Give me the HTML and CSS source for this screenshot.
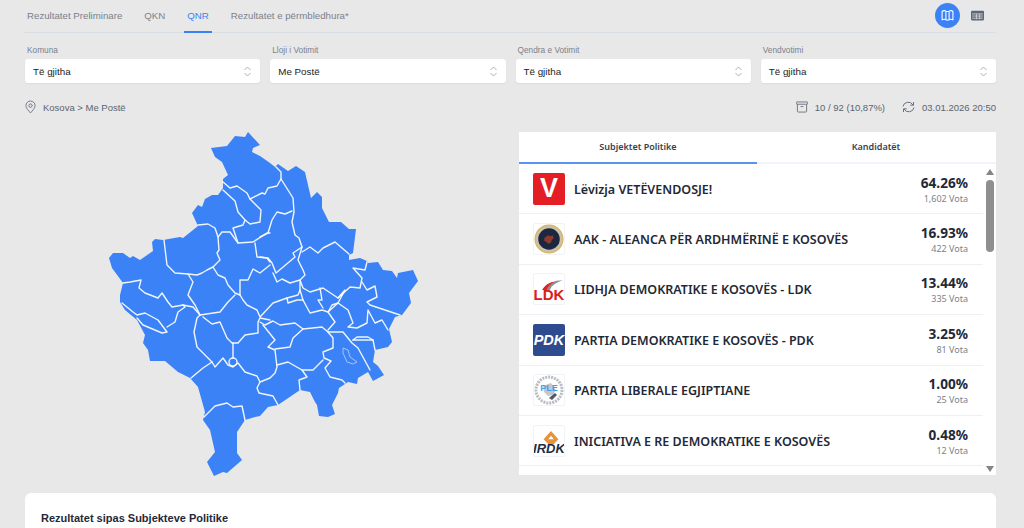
FILE: index.html
```html
<!DOCTYPE html>
<html lang="en">

<head>
    <meta charset="UTF-8">
    <title>Rezultatet</title>
    <link rel="stylesheet" href="styles.css">
</head>

<body>
    <div class="page">

        <div class="top-bar">
            <div class="tabs">
                <a class="tab">Rezultatet Preliminare</a>
                <a class="tab">QKN</a>
                <a class="tab active">QNR</a>
                <a class="tab">Rezultatet e përmbledhura*</a>
            </div>
            <div class="views">
                <span class="view-btn on">
                    <svg width="13" height="13" viewBox="0 0 24 24" fill="none" stroke="#fff" stroke-width="2" stroke-linejoin="round">
                        <path d="M2 4c3-1.500 5-1.500 7 0c2 1 4 1 6 0c2-1.500 4-1.500 7 0v16c-3-1.500-5-1.500-7 0c-2 1-4 1-6 0c-2-1.500-4-1.500-7 0z" />
                        <path d="M9 5v15M15 5v15" />
                    </svg>
                </span>
                <span class="view-btn">
                    <svg width="13" height="13" viewBox="0 0 24 24">
                        <rect x="0" y="3" width="24" height="18" rx="2" fill="#5f6673" />
                        <path d="M2 9h20M2 13h20M2 17h20M10 9v10M16 9v10" stroke="#e6e8ec" stroke-width="1.300" />
                    </svg>
                </span>
            </div>
        </div>

        <div class="filters">
            <div class="filter">
                <label>Komuna</label>
                <div class="select">Të gjitha
                    <svg class="updown" width="7" height="11" viewBox="0 0 7 11"><path d="M.5 4l3-3l3 3M.5 7l3 3l3-3" /></svg>
                </div>
            </div>
            <div class="filter">
                <label>Lloji i Votimit</label>
                <div class="select">Me Postë
                    <svg class="updown" width="7" height="11" viewBox="0 0 7 11"><path d="M.5 4l3-3l3 3M.5 7l3 3l3-3" /></svg>
                </div>
            </div>
            <div class="filter">
                <label>Qendra e Votimit</label>
                <div class="select">Të gjitha
                    <svg class="updown" width="7" height="11" viewBox="0 0 7 11"><path d="M.5 4l3-3l3 3M.5 7l3 3l3-3" /></svg>
                </div>
            </div>
            <div class="filter">
                <label>Vendvotimi</label>
                <div class="select">Të gjitha
                    <svg class="updown" width="7" height="11" viewBox="0 0 7 11"><path d="M.5 4l3-3l3 3M.5 7l3 3l3-3" /></svg>
                </div>
            </div>
        </div>

        <div class="info-row">
            <div class="crumb">
                <svg width="11" height="14" viewBox="0 0 12 14" fill="none" stroke="#6b7280" stroke-width="1">
                    <path d="M6 13.500c-2-2.500-5-5-5-8a5 5 0 0 1 10 0c0 3-3 5.500-5 8z" />
                    <circle cx="6" cy="5.500" r="1.800" />
                </svg>
                <span>Kosova &gt; Me Postë</span>
            </div>
            <div class="stats">
                <span class="stat">
                    <svg width="12" height="12" viewBox="0 0 13 12" fill="none" stroke="#6b7280" stroke-width="1">
                        <rect x="0.500" y="0.500" width="12" height="2.500" rx="0.500" />
                        <path d="M1.500 3v7.500a1 1 0 0 0 1 1h8a1 1 0 0 0 1-1V3M5 5.500h3" />
                    </svg>
                    10 / 92 (10,87%)
                </span>
                <span class="stat">
                    <svg width="13" height="12" viewBox="0 0 13 12" fill="none" stroke="#6b7280" stroke-width="1">
                        <path d="M1 5.500a5.300 5 0 0 1 10-1.500M12 6.500a5.300 5 0 0 1-10 1.500" />
                        <path d="M11.500 1v3.200H8.300M1.500 11V7.800h3.200" />
                    </svg>
                    03.01.2026 20:50
                </span>
            </div>
        </div>

        <div class="content">
            <div class="map-box">
                <svg class="map" width="494" height="355" viewBox="25 125 494 355">
                    <polygon class="land" points="211,148 227,146 235,136 245,137 248,132 260,145 253,148 252,152 260,156 270,163 275,167 278,164 288,171 296,166 305,172 311,198 317,192 322,197 322,208 329,222 341,222 349,229 356,229 353,253 349,255 349,260 360,258 367,261 368,263 378,262 383,270 392,271 397,278 398,273 413,270 418,281 409,293 411,303 402,315 395,317 389,329 392,342 388,347 375,350 373,362 378,366 384,375 373,381 368,372 358,378 357,384 348,382 339,388 338,393 332,405 335,414 328,417 319,416 317,405 315,402 310,392 300,390 278,405 268,407 260,416 255,417 245,420 237,432 237,453 242,460 227,473 223,472 214,476 207,462 215,452 210,430 203,420 205,412 198,387 190,378 178,372 165,361 150,361 148,350 143,343 145,335 137,320 125,310 120,302 120,295 123,283 112,268 109,258 113,253 123,253 130,258 133,256 140,260 153,251 152,242 155,239 163,240 180,237 183,238 198,226 192,213 198,205 202,207 205,199 212,195 218,195 223,188 223,179 228,175 222,162 215,157" />
                    <g class="borders">
                        <polyline points="223,182 230,188 237,186 247,193 250,199 262,193 265,194 268,188 277,186 281,179 281,172 276,167" />
                        <polyline points="281,179 293,198 294,212 292,222 295,235 299,238 302,247 293,253 295,257 276,273 272,263 268,258 260,257" />
                        <polyline points="302,247 298,260 303,270 305,275 300,280 290,283 282,279 277,282 273,273" />
                        <polyline points="302,252 310,247 318,253 323,248 335,242 349,254" />
                        <polyline points="367,262 365,270 353,268 362,278 360,288 350,287 338,298 323,288 310,292 303,288 300,280 300,290 303,300" />
                        <polyline points="362,282 367,290 375,286 377,297 367,302 370,305 400,315" />
                        <polyline points="260,237 268,233 272,220 277,212 285,214 292,211" />
                        <polyline points="223,190 235,201 238,212 245,220 243,225 233,228 238,243 253,242 267,233 270,233" />
                        <polyline points="250,199 261,210 260,222 250,224 245,220" />
                        <polyline points="198,225 208,224 215,228 218,237 219,250 217,253 220,260 213,267 207,270 202,273 197,275 188,274 175,273 167,265 164,240" />
                        <polyline points="218,237 222,232 230,232 238,243" />
                        <polyline points="255,243 257,257 267,258 270,262" />
                        <polyline points="213,267 218,275 225,278 228,285 235,293 240,295 240,280 248,280 253,269 260,273 270,265" />
                        <polyline points="188,274 193,282 188,295 195,305 200,315" />
                        <polyline points="123,283 130,282 141,280 139,288 145,293 158,298 162,293 168,302 172,307 183,305 185,307 178,312 175,322 167,327" />
                        <polyline points="122,303 133,312 137,315 145,313 158,320 167,332 162,333 143,325 137,318" />
                        <polyline points="183,305 193,307 200,315 197,318 194,332 197,347 212,362 203,368 191,378" />
                        <polyline points="200,315 220,312 228,302 235,295" />
                        <polyline points="203,317 212,324 220,322 227,338 232,343 238,343 245,335 258,333 258,322 260,318 270,320" />
                        <polyline points="233,343 233,358" />
                        <circle cx="233" cy="362" r="4" />
                        <polyline points="212,362 215,367 223,358 228,365 233,367 238,363 245,372 257,376 260,382 270,378 275,373 277,367 275,350 268,347 275,340 263,325" />
                        <polyline points="260,382 257,388 259,393 273,396 278,405" />
                        <polyline points="204,417 215,406 227,403 233,407 242,406 245,420" />
                        <polyline points="240,295 243,300 247,305 257,310 260,317 273,303 287,298 298,295 300,290" />
                        <polyline points="260,322 265,325 273,321 280,325 295,323 303,329 322,327 328,332 333,338 333,348 323,352 324,358 331,361 325,368 330,377 342,380 345,383" />
                        <polyline points="275,349 290,347 293,338 303,329" />
                        <polyline points="277,365 288,362 302,370 313,370 323,360" />
                        <polyline points="302,370 307,377 299,380 300,390" />
                        <polyline points="328,332 343,332 352,343 358,348 370,370" />
                        <polyline points="353,340 357,337 368,337 373,340 375,350" />
                        <polyline points="353,340 373,340" />
                        <polyline points="328,330 335,322 328,312 332,305 338,303 348,310 353,323 348,327 357,328 367,323 368,310 375,323 382,320 388,330" />
                        <polyline points="287,298 288,303 297,300 303,300 310,313 322,310 328,312 338,303 345,290 338,298" />
                        <polyline points="320,288 322,300 318,300 323,308" />
                        <polygon class="lake" points="343,348 348,350 350,357 357,362 353,364 347,362 343,353" />
                    </g>
                </svg>
            </div>

            <div class="panel">
                <div class="panel-tabs">
                    <div class="panel-tab active">Subjektet Politike</div>
                    <div class="panel-tab">Kandidatët</div>
                </div>
                <div class="panel-body">
                    <div class="list">
                        <div class="row">
                            <div class="logo logo-v">V</div>
                            <div class="name">Lëvizja VETËVENDOSJE!</div>
                            <div class="nums"><b>64.26%</b><span>1,602 Vota</span></div>
                        </div>
                        <div class="row">
                            <div class="logo logo-line">
                                <svg width="32" height="32" viewBox="0 0 32 32">
                                    <circle cx="16" cy="16" r="15.500" fill="#d8b765" />
                                    <circle cx="16" cy="16" r="14" fill="#c9c2ae" />
                                    <circle cx="16" cy="16" r="11.500" fill="#1d2740" />
                                    <path d="M11 15l4-3l2 1l3-1l1 3l-2 2l-1 3l-3 1l-2-2l-2-1z" fill="#8f3a2e" />
                                </svg>
                            </div>
                            <div class="name">AAK - ALEANCA PËR ARDHMËRINË E KOSOVËS</div>
                            <div class="nums"><b>16.93%</b><span>422 Vota</span></div>
                        </div>
                        <div class="row">
                            <div class="logo logo-line logo-ldk">
                                <svg class="swoosh" width="24" height="11" viewBox="0 0 22 10"><path d="M2 10C6 4 13 1 21 1C15 3 11 5 9 10z" fill="#8a8f96" /><path d="M2 10C5 5 9 3 13 2.500C9 5 7 7 6 10z" fill="#e2231a" /></svg>
                                <span>LDK</span>
                            </div>
                            <div class="name">LIDHJA DEMOKRATIKE E KOSOVËS - LDK</div>
                            <div class="nums"><b>13.44%</b><span>335 Vota</span></div>
                        </div>
                        <div class="row">
                            <div class="logo logo-pdk">PDK</div>
                            <div class="name">PARTIA DEMOKRATIKE E KOSOVËS - PDK</div>
                            <div class="nums"><b>3.25%</b><span>81 Vota</span></div>
                        </div>
                        <div class="row">
                            <div class="logo logo-line logo-ple">
                                <svg width="30" height="30" viewBox="0 0 30 30" fill="none">
                                    <circle cx="15" cy="15" r="13" stroke="#b9bdc2" stroke-width="3" stroke-dasharray="2 1" />
                                    <path d="M9 11l8-3l5 7l-3 5l-5 1l-4-4z" fill="#c4c8cd" />
                                    <path d="M15 23l6-5l2 2l-5 5z" fill="#4d5a6b" />
                                </svg>
                                <span>PLE</span>
                            </div>
                            <div class="name">PARTIA LIBERALE EGJIPTIANE</div>
                            <div class="nums"><b>1.00%</b><span>25 Vota</span></div>
                        </div>
                        <div class="row">
                            <div class="logo logo-line logo-irdk">
                                <svg class="roof" width="18" height="13" viewBox="0 0 16 14"><path d="M8 0l8 9l-5 5H5L0 9z" fill="#e8923a" /><path d="M8 5l3 4H5z" fill="#fff" /></svg>
                                <span>IRDK</span>
                            </div>
                            <div class="name">INICIATIVA E RE DEMOKRATIKE E KOSOVËS</div>
                            <div class="nums"><b>0.48%</b><span>12 Vota</span></div>
                        </div>
                    </div>
                    <div class="scrollbar">
                        <span class="arrow up"></span>
                        <span class="thumb-track"><span class="thumb"></span></span>
                        <span class="arrow down"></span>
                    </div>
                </div>
            </div>
        </div>

        <div class="card">
            <h3>Rezultatet sipas Subjekteve Politike</h3>
        </div>

    </div>
</body>

</html>
```

FILE: styles.css
```css
* {
    box-sizing: border-box;
}

html,
body {
    margin: 0;
    height: 100%;
    overflow: hidden;
}

body {
    background-color: #e8e8e8;
    font-family: "Liberation Sans", Arial, sans-serif;
    color: #1f2937;
}

.page {
    padding: 0 28px 0 25px;
}

/* top tabs */
.top-bar {
    display: flex;
    justify-content: space-between;
    align-items: center;
    height: 33px;
    margin-left: -1px;
    border-bottom: 1px solid #d9dde4;
}

.tabs {
    display: flex;
    gap: 16px;
    height: 33px;
}

.tab {
    padding: 0 3px;
    font-size: 9.7px;
    line-height: 32px;
    color: #7b818b;
}

.tab.active {
    color: #3b82f6;
    border-bottom: 2px solid #3b82f6;
    height: 33px;
}

.views {
    display: flex;
    gap: 5px;
    margin-top: -1px;
    margin-right: 6px;
}

.view-btn {
    display: flex;
    align-items: center;
    justify-content: center;
    width: 25px;
    height: 25px;
    border-radius: 50%;
    background-color: #e6e8ec;
}

.view-btn.on {
    background-color: #3b82f6;
}

/* filters */
.filters {
    display: grid;
    grid-template-columns: repeat(4, 1fr);
    gap: 10px;
    margin-top: 11px;
}

.filter label {
    display: block;
    height: 15px;
    padding-left: 2px;
    font-size: 8.3px;
    line-height: 13px;
    color: #7b818b;
}

.select {
    display: flex;
    align-items: center;
    justify-content: space-between;
    height: 24px;
    padding: 0 9px 0 8px;
    background-color: #fff;
    border-radius: 3px;
    box-shadow: 0 1px 2px rgba(0, 0, 0, .06);
    font-size: 9.8px;
    color: #222;
}

.updown {
    fill: none;
    stroke: #a3a8b0;
    stroke-width: .9;
}

/* breadcrumb and counters */
.info-row {
    display: flex;
    justify-content: space-between;
    align-items: center;
    height: 14px;
    margin-top: 17px;
    font-size: 9.5px;
    color: #5b6470;
}

.crumb {
    display: flex;
    align-items: center;
    gap: 7px;
}

.stats {
    display: flex;
    gap: 17px;
}

.stat {
    display: flex;
    align-items: center;
    gap: 7px;
}

/* map and results */
.content {
    display: flex;
    margin-top: 18px;
}

.map-box {
    width: 494px;
    height: 343px;
    margin-top: -7px;
}

.map {
    display: block;
}

.land {
    fill: #3b82f6;
}

.borders polyline,
.borders circle {
    fill: none;
    stroke: #fff;
    stroke-width: 1.4;
    stroke-linejoin: round;
    stroke-linecap: round;
    opacity: .92;
}

.borders .lake {
    fill: none;
    stroke: #bcd6fb;
    stroke-width: .8;
}

.panel {
    width: 477px;
    height: 343px;
    background-color: #fff;
    font-family: "Noto Sans", "Open Sans", sans-serif;
}

.panel-tabs {
    display: flex;
    height: 32px;
    border-bottom: 2px solid #f1f4f9;
}

.panel-tab {
    width: 238px;
    height: 32px;
    font-size: 9px;
    font-weight: 600;
    line-height: 30px;
    text-align: center;
    color: #374151;
}

.panel-tab.active {
    border-bottom: 2px solid #5b93f0;
}

.panel-body {
    display: flex;
    height: 311px;
}

.list {
    flex: 1;
    overflow: hidden;
}

.row {
    display: flex;
    align-items: center;
    height: 50.4px;
    padding: 0 15px 0 14px;
    border-bottom: 1px solid #eef0f3;
}

.row:last-child {
    border-bottom-color: #e8f0f8;
}

.logo {
    position: relative;
    display: flex;
    align-items: center;
    justify-content: center;
    flex: none;
    width: 32px;
    height: 32px;
    border-radius: 2px;
    overflow: hidden;
}

.logo-v {
    background-color: #e31e24;
    color: #fff;
    font-family: "Liberation Sans", sans-serif;
    font-size: 27px;
    font-weight: 700;
}

.logo-line {
    border: 1px solid #f0f3f7;
}

.logo-ldk span {
    position: absolute;
    left: -1px;
    right: -1px;
    bottom: 3px;
    font-family: "Liberation Sans", sans-serif;
    font-size: 15px;
    font-weight: 700;
    line-height: 12px;
    text-align: center;
    color: #d9201a;
}

.swoosh {
    position: absolute;
    top: 5px;
    left: 6px;
}

.logo-pdk {
    background-color: #2f4b8f;
    color: #fff;
    font-family: "Liberation Sans", sans-serif;
    font-size: 14.5px;
    font-style: italic;
    font-weight: 700;
}

.logo-ple span {
    position: absolute;
    top: 8px;
    left: 0;
    right: 0;
    font-family: "Liberation Sans", sans-serif;
    font-size: 9px;
    font-weight: 700;
    text-align: center;
    color: #3ea2e8;
}

.roof {
    position: absolute;
    top: 5px;
    left: 8px;
}

.logo-irdk span {
    position: absolute;
    left: -1px;
    right: -1px;
    bottom: 1px;
    font-family: "Liberation Sans", sans-serif;
    font-size: 13px;
    font-style: italic;
    font-weight: 700;
    line-height: 12px;
    text-align: center;
    color: #1f2d44;
}

.name {
    flex: 1;
    padding: 1px 0 0 9px;
    font-size: 12.5px;
    font-weight: 600;
    color: #1f2937;
}

.nums {
    display: flex;
    flex-direction: column;
    align-items: flex-end;
    padding-top: 2px;
}

.nums b {
    font-size: 13.6px;
    font-weight: 700;
    line-height: 17px;
    color: #1f2937;
}

.nums span {
    margin-top: 1px;
    font-size: 9px;
    line-height: 14px;
    color: #7b818b;
}

/* fake scrollbar, the windows one with arrows */
.scrollbar {
    display: flex;
    flex-direction: column;
    align-items: center;
    flex: none;
    width: 13px;
    padding-top: 5px;
}

.arrow {
    flex: none;
    width: 0;
    height: 0;
    border-left: 4.5px solid transparent;
    border-right: 4.5px solid transparent;
}

.arrow.up {
    border-bottom: 6px solid #858585;
}

.arrow.down {
    margin-bottom: 3px;
    border-top: 6px solid #858585;
}

.thumb-track {
    flex: 1;
    padding-top: 5px;
}

.thumb {
    display: block;
    width: 8px;
    height: 72px;
    border-radius: 4px;
    background-color: #8f8f8f;
}

/* bottom card */
.card {
    height: 35px;
    margin-top: 18px;
    padding: 19px 16px 0;
    background-color: #fff;
    border-radius: 6px 6px 0 0;
}

.card h3 {
    margin: 0;
    font-size: 11px;
    font-weight: 700;
    line-height: 13px;
    color: #1f2937;
}
```
